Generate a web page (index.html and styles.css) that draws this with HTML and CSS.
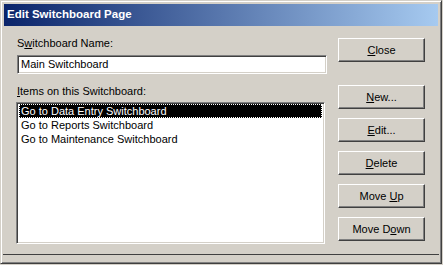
FILE: index.html
```html
<!DOCTYPE html>
<html lang="en">
<head>
    <meta charset="UTF-8">
    <title>Edit Switchboard Page</title>
    <link rel="stylesheet" href="styles.css">
</head>
<body>
    <div class="window">
        <div class="title-bar">Edit Switchboard Page</div>

        <div class="client">
            <div class="fields">
                <label class="field-label">S<u>w</u>itchboard Name:</label>
                <div class="text-box">Main Switchboard</div>

                <label class="field-label items-label"><u>I</u>tems on this Switchboard:</label>
                <div class="list-box">
                    <div class="list-item selected">Go to Data Entry Switchboard</div>
                    <div class="list-item">Go to Reports Switchboard</div>
                    <div class="list-item">Go to Maintenance Switchboard</div>
                </div>
            </div>

            <div class="buttons">
                <button class="btn btn-close"><u>C</u>lose</button>
                <div class="btn-group">
                    <button class="btn"><u>N</u>ew...</button>
                    <button class="btn"><u>E</u>dit...</button>
                    <button class="btn"><u>D</u>elete</button>
                    <button class="btn">Move <u>U</u>p</button>
                    <button class="btn">Move D<u>o</u>wn</button>
                </div>
            </div>
        </div>
        <div class="bottom-edge"></div>
    </div>
</body>
</html>
```

FILE: styles.css
```css
:root {
    --face: #d4d0c8;
    --shadow: #808080;
    --dark: #404040;
    --light: #fff;
}

body {
    margin: 0;
    background-color: var(--face);
    font-family: 'Liberation Sans', Arial, sans-serif;
    font-size: 11px;
    color: #000;
}

.window {
    box-sizing: border-box;
    width: 442px;
    height: 264px;
    padding: 3px;
    background: var(--face);
    border: 1px solid;
    border-color: var(--face) var(--dark) var(--dark) var(--face);
    box-shadow: inset 1px 1px var(--light), inset -1px -1px var(--shadow);
}

.title-bar {
    height: 22px;
    line-height: 21px;
    padding-left: 3px;
    background: linear-gradient(to right, #0a246a, #a6caf0);
    color: #fff;
    font-family: 'Liberation Sans Narrow', 'Liberation Sans', Arial, sans-serif;
    font-weight: bold;
    font-size: 11.5px;
}

.client {
    display: flex;
    height: 228px;
    box-sizing: border-box;
    padding-left: 13px;
}

.fields {
    display: flex;
    flex-direction: column;
    width: 310px;
    padding-top: 11px;
}

.field-label {
    display: block;
    height: 13px;
    line-height: 13px;
}

.items-label {
    margin-top: 11px;
}

.text-box {
    box-sizing: border-box;
    height: 19px;
    margin-top: 5px;
    padding: 2px 3px;
    line-height: 13px;
    background: #fff;
    border: 1px solid;
    border-color: var(--shadow) var(--light) var(--light) var(--shadow);
    box-shadow: inset 1px 1px var(--dark), inset -1px -1px var(--face);
}

.list-box {
    box-sizing: border-box;
    height: 142px;
    width: 309px;
    margin-top: 4px;
    margin-left: -1px;
    padding: 1px 2px;
    background: #fff;
    border: 1px solid;
    border-color: var(--shadow) var(--light) var(--light) var(--shadow);
    box-shadow: inset 1px 1px var(--dark), inset -1px -1px var(--face);
}

.list-item {
    box-sizing: border-box;
    height: 14px;
    line-height: 12px;
    padding: 0 1px 2px;
    border: 1px solid transparent;
    white-space: nowrap;
}

.list-item.selected {
    background: #000;
    color: #fff;
    border: 1px dotted #fff;
}

.buttons {
    display: flex;
    flex-direction: column;
    margin-left: 11px;
    padding-top: 12px;
}

.btn-group {
    display: flex;
    flex-direction: column;
    gap: 9px;
    margin-top: 23px;
}

.btn {
    box-sizing: border-box;
    width: 87px;
    height: 24px;
    padding: 0;
    background: var(--face);
    font-family: 'Liberation Sans', Arial, sans-serif;
    font-size: 11px;
    color: #000;
    border: 1px solid;
    border-color: var(--light) var(--dark) var(--dark) var(--light);
    box-shadow: inset -1px -1px var(--shadow);
    border-radius: 0;
}

.bottom-edge {
    height: 0;
    margin: 0 -1px;
    border-top: 1px solid var(--dark);
}
```
